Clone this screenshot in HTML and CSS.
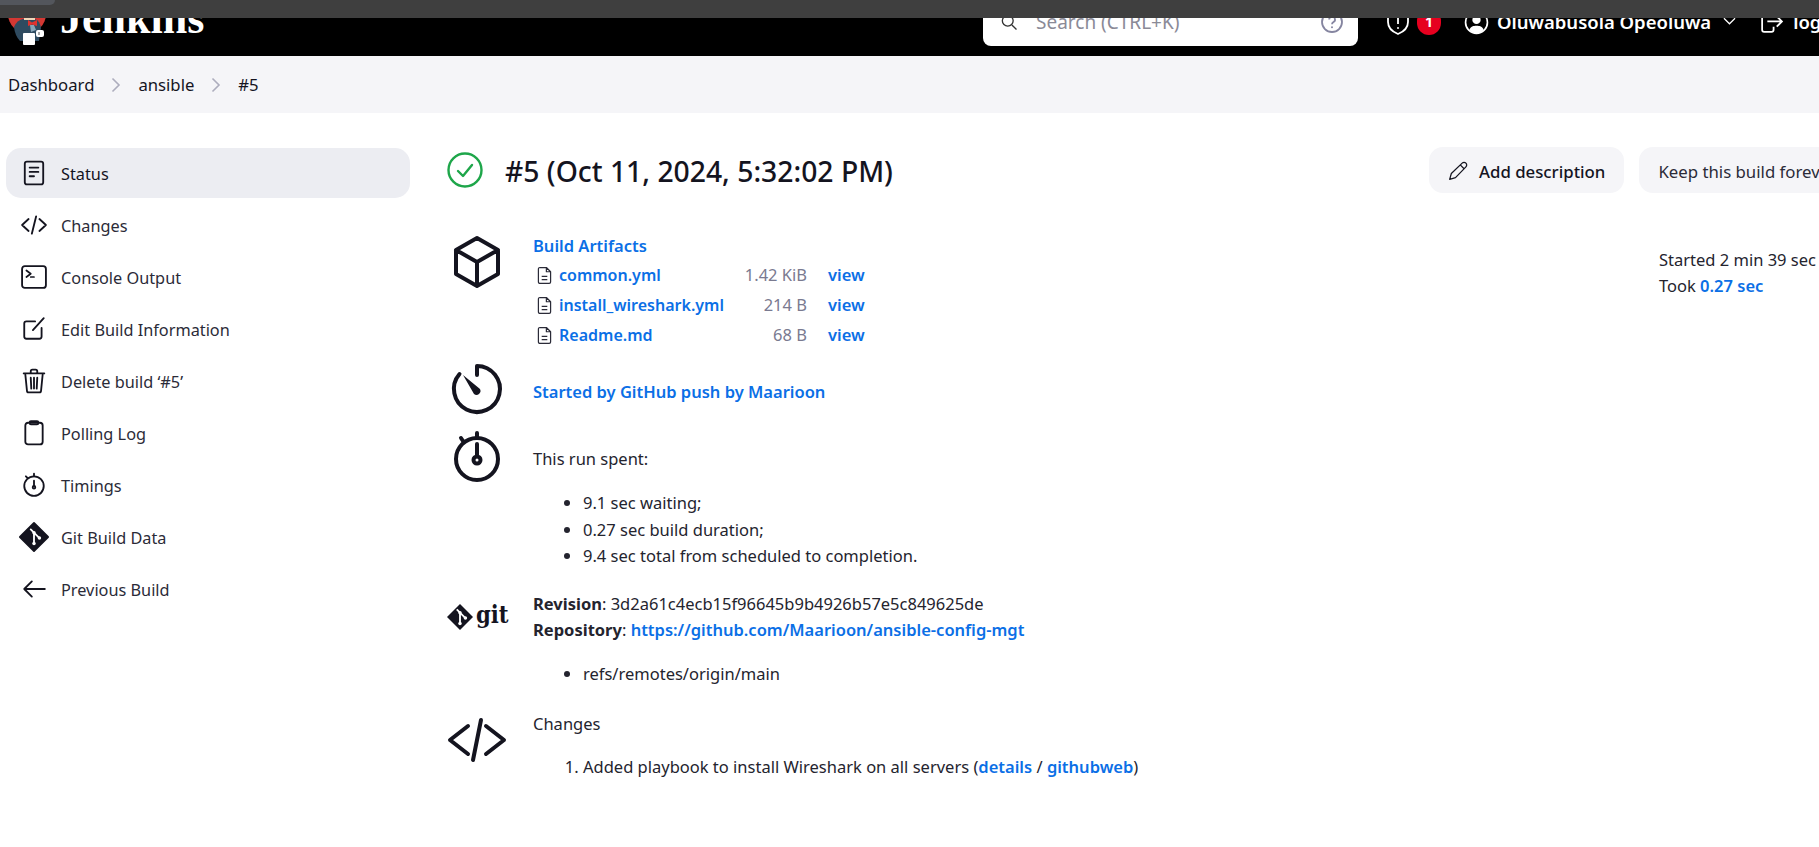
FILE: index.html
```html
<!DOCTYPE html>
<html lang="en">
<head>
    <meta charset="UTF-8">
    <title>ansible #5 - Jenkins</title>
    <link rel="stylesheet" href="styles.css">
</head>
<body>

    <div class="browser-strip"><span class="browser-tab"></span></div>

    <header class="top-bar">
        <a class="brand">
            <svg class="brand-logo" viewBox="0 -3 50 50">
                <circle cx="27" cy="14" r="19" fill="#d33833"/>
                <path d="M14 27 Q17 20 23 19 L35 19 Q40 21 41 28 L39 41 H20 Q15 36 14 27 Z" fill="#2f4b60"/>
                <rect x="24" y="15" width="11" height="5" fill="#f0d6b7"/>
                <path d="M30 25 L34 25 L36 30 L31 32 Z" fill="#87a5b8"/>
                <path d="M28 20 L32 22.5 L37 20 L37 26 L32 24.5 L28 26 Z" fill="#e0322e"/>
                <rect x="23" y="33" width="12" height="12" rx="1" fill="#fff"/>
                <rect x="36" y="30" width="8" height="7" rx="2" fill="#fff"/>
                <path d="M39 32 V35" stroke="#555" fill="none"/>
            </svg>
            <span class="brand-name">Jenkins</span>
        </a>
        <div class="search-box">
            <svg class="search-icon" viewBox="0 0 24 24"><circle cx="10.5" cy="10.5" r="6.5"/><path d="M15.5 15.5 L21 21"/></svg>
            <span class="search-hint">Search (CTRL+K)</span>
            <svg class="help-icon" viewBox="0 0 24 24"><circle cx="12" cy="12" r="10"/><path d="M9.2 9.5 A2.9 2.9 0 1 1 13.5 12 C12.5 12.6 12 13.2 12 14.3"/><circle class="dot" cx="12" cy="17.3" r="1"/></svg>
        </div>
        <svg class="shield-icon" viewBox="0 0 24 28"><path d="M12 2 L22 6 V14 C22 20 17 24 12 26 C7 24 2 20 2 14 V6 Z"/><path d="M12 9 V16"/><circle class="dot" cx="12" cy="20" r="1"/></svg>
        <span class="alert-badge">1</span>
        <svg class="user-icon" viewBox="0 0 24 24"><circle cx="12" cy="12" r="10.5"/><circle class="fill" cx="12" cy="9.5" r="4"/><path class="fill" d="M5 19 C6.5 15.5 9 15 12 15 C15 15 17.5 15.5 19 19 C17 21.5 14.5 22.5 12 22.5 C9.5 22.5 7 21.5 5 19 Z"/></svg>
        <span class="user-name">Oluwabusola Opeoluwa</span>
        <svg class="chevron-icon" viewBox="0 0 14 10"><path d="M1 2 L7 8 L13 2"/></svg>
        <svg class="logout-icon" viewBox="0 0 24 24"><path d="M14 7 V3 H3 V19 A2 2 0 0 0 5 21 H12 A2 2 0 0 0 14 19 V16"/><path d="M8 11 H22 M17 6 L22 11 L17 16"/></svg>
        <span class="logout-text">log out</span>
    </header>

    <nav class="breadcrumbs">
        <a>Dashboard</a>
        <svg class="crumb-sep" viewBox="0 0 10 16"><path d="M1.5 1.5 L8 8 L1.5 14.5"/></svg>
        <a>ansible</a>
        <svg class="crumb-sep" viewBox="0 0 10 16"><path d="M1.5 1.5 L8 8 L1.5 14.5"/></svg>
        <a>#5</a>
    </nav>

    <div class="page">
        <aside class="side-nav">
            <a class="side-item active">
                <svg viewBox="0 0 24 24"><rect x="3.5" y="1.5" width="17" height="21" rx="2"/><path d="M8 7 H16 M8 11 H16 M8 15 H12"/></svg>
                Status
            </a>
            <a class="side-item">
                <svg viewBox="0 0 24 24"><path d="M7 6.5 L1 12 L7 17.5 M17 6.5 L23 12 L17 17.5 M14 4 L10 20"/></svg>
                Changes
            </a>
            <a class="side-item">
                <svg viewBox="0 0 24 24"><rect x="1" y="2" width="22" height="20" rx="2.5"/><path d="M5 6 L9 9 L5 12 M9 12 H12" stroke-width="1.6"/></svg>
                Console Output
            </a>
            <a class="side-item">
                <svg viewBox="0 0 24 24"><path d="M13 5 H5 A2 2 0 0 0 3 7 V19 A2 2 0 0 0 5 21 H17 A2 2 0 0 0 19 19 V11"/><path d="M11 13 L21 2"/></svg>
                Edit Build Information
            </a>
            <a class="side-item">
                <svg viewBox="0 0 24 24"><path d="M4 6 L5.5 21 A1.5 1.5 0 0 0 7 22.5 H17 A1.5 1.5 0 0 0 18.5 21 L20 6"/><path d="M2.5 5 H21.5 M9 5 V3 A1.5 1.5 0 0 1 10.5 1.5 H13.5 A1.5 1.5 0 0 1 15 3 V5 M9 9 L9.5 19 M12 9 V19 M15 9 L14.5 19"/></svg>
                Delete build ‘#5’
            </a>
            <a class="side-item">
                <svg viewBox="0 0 24 24"><rect x="4" y="2.5" width="16" height="20" rx="2.5"/><rect x="8" y="1" width="8" height="3" rx="1.2"/></svg>
                Polling Log
            </a>
            <a class="side-item">
                <svg viewBox="0 0 24 24"><circle cx="12" cy="13" r="9"/><path d="M12 8 V13 M12 1.5 V4 M4.5 4 L6 5.5"/><circle cx="12" cy="14" r="1.2"/></svg>
                Timings
            </a>
            <a class="side-item">
                <svg viewBox="0 0 24 24"><path class="solid" d="M12 -1 L25 12 L12 25 L-1 12 Z"/><path class="cut" d="M9 5 L17 13 M12 8 V18 M12 8"/><circle class="hole" cx="12" cy="8" r="1.6"/><circle class="hole" cx="17" cy="13" r="1.6"/><circle class="hole" cx="12" cy="18" r="1.6"/></svg>
                Git Build Data
            </a>
            <a class="side-item">
                <svg viewBox="0 0 24 24"><path d="M3 12 H22 M10 5 L3 12 L10 19"/></svg>
                Previous Build
            </a>
        </aside>

        <main class="build">
            <div class="build-head">
                <svg class="status-ok" viewBox="0 0 36 36"><circle cx="18" cy="18" r="16.5"/><path d="M11 19 L16 24 L25 13"/></svg>
                <h1 class="build-title">#5 (Oct 11, 2024, 5:32:02 PM)</h1>
                <button class="btn btn-strong">
                    <svg viewBox="0 0 24 24"><path d="M2 22 L4 15 L17 2.5 A2.5 2.5 0 0 1 21.5 7 L9 20 Z M15 5 L19 9"/></svg>
                    Add description
                </button>
                <button class="btn">Keep this build forever</button>
            </div>

            <div class="build-body">
                <div class="rows">
                    <section class="row row-artifacts">
                        <svg class="row-icon" viewBox="0 0 52 52"><path d="M26 2 L47 14 V38 L26 50 L5 38 V14 Z M5 14 L26 26 L47 14 M26 26 V50"/></svg>
                        <div>
                            <a class="link">Build Artifacts</a>
                            <table class="files">
                                <tr>
                                    <td class="file-name"><svg viewBox="0 0 16 20"><path d="M3 1.5 H10 L14.5 6 V17 A1.5 1.5 0 0 1 13 18.5 H3 A1.5 1.5 0 0 1 1.5 17 V3 A1.5 1.5 0 0 1 3 1.5 Z M10 1.5 V6 H14.5 M5 11 H11 M5 14.5 H11"/></svg><a class="link">common.yml</a></td>
                                    <td class="file-size">1.42 KiB</td>
                                    <td class="file-view"><a class="link">view</a></td>
                                </tr>
                                <tr>
                                    <td class="file-name"><svg viewBox="0 0 16 20"><path d="M3 1.5 H10 L14.5 6 V17 A1.5 1.5 0 0 1 13 18.5 H3 A1.5 1.5 0 0 1 1.5 17 V3 A1.5 1.5 0 0 1 3 1.5 Z M10 1.5 V6 H14.5 M5 11 H11 M5 14.5 H11"/></svg><a class="link">install_wireshark.yml</a></td>
                                    <td class="file-size">214 B</td>
                                    <td class="file-view"><a class="link">view</a></td>
                                </tr>
                                <tr>
                                    <td class="file-name"><svg viewBox="0 0 16 20"><path d="M3 1.5 H10 L14.5 6 V17 A1.5 1.5 0 0 1 13 18.5 H3 A1.5 1.5 0 0 1 1.5 17 V3 A1.5 1.5 0 0 1 3 1.5 Z M10 1.5 V6 H14.5 M5 11 H11 M5 14.5 H11"/></svg><a class="link">Readme.md</a></td>
                                    <td class="file-size">68 B</td>
                                    <td class="file-view"><a class="link">view</a></td>
                                </tr>
                            </table>
                        </div>
                    </section>

                    <section class="row row-started">
                        <svg class="row-icon" viewBox="0 0 52 52"><path d="M26 3 A23 23 0 1 1 8.5 11 M26 3 V12"/><path class="solid" d="M12 12 L29 26 A4 4 0 0 1 23 31 Z"/></svg>
                        <a class="link started-link">Started by GitHub push by Maarioon</a>
                    </section>

                    <section class="row row-spent">
                        <svg class="row-icon" viewBox="0 0 52 52"><circle cx="26" cy="29" r="21"/><path d="M26 14 V26 M26 3 V8 M10 8 L12 11"/><circle cx="26" cy="30" r="3.5"/></svg>
                        <div>
                            <p>This run spent:</p>
                            <ul class="spent-list">
                                <li>9.1 sec waiting;</li>
                                <li>0.27 sec build duration;</li>
                                <li>9.4 sec total from scheduled to completion.</li>
                            </ul>
                        </div>
                    </section>

                    <section class="row row-git">
                        <div class="git-logo">
                            <svg viewBox="0 0 24 24"><path class="solid" d="M12 0 L24 12 L12 24 L0 12 Z"/><path class="cut" d="M9 5 L17 13 M12 8 V18"/><circle class="hole" cx="12" cy="8" r="1.6"/><circle class="hole" cx="17" cy="13" r="1.6"/><circle class="hole" cx="12" cy="18" r="1.6"/></svg>
                            <span class="git-word">git</span>
                        </div>
                        <div>
                            <p><b>Revision</b>: 3d2a61c4ecb15f96645b9b4926b57e5c849625de</p>
                            <p><b>Repository</b>: <a class="link">https://github.com/Maarioon/ansible-config-mgt</a></p>
                            <ul class="branch-list">
                                <li>refs/remotes/origin/main</li>
                            </ul>
                        </div>
                    </section>

                    <section class="row row-changes">
                        <svg class="row-icon" viewBox="0 0 52 52"><path d="M17 14 L-1 28 L17 42 M35 14 L53 28 L35 42 M30 8 L22 48"/></svg>
                        <div>
                            <p>Changes</p>
                            <ol class="change-list">
                                <li>Added playbook to install Wireshark on all servers (<a class="link">details</a> / <a class="link">githubweb</a>)</li>
                            </ol>
                        </div>
                    </section>
                </div>

                <div class="build-times">
                    <p>Started 2 min 39 sec ago</p>
                    <p>Took <a class="link">0.27 sec</a></p>
                </div>
            </div>
        </main>
    </div>

</body>
</html>
```

FILE: styles.css
```css
/* Global Styles */
html, body {
    margin: 0;
    padding: 0;
    height: 847px;
    overflow: hidden;
    background: #fff;
}

body {
    font-family: 'Noto Sans', sans-serif;
    font-size: 16.5px;
    line-height: 26px;
    color: #24242e;
    width: 1819px;
}

p {
    margin: 0;
}

/* Browser window edge that covers the top of the page */
.browser-strip {
    position: absolute;
    top: 0;
    left: 0;
    right: 0;
    height: 18px;
    background: #3f3f3f;
    z-index: 5;
}

.browser-tab {
    display: block;
    width: 55px;
    height: 5px;
    background: #53565c;
    border-radius: 0 0 8px 0;
}

/* Header */
.top-bar {
    display: flex;
    align-items: center;
    height: 44px;
    padding-bottom: 12px;
    background: #000;
    color: #fff;
    position: relative;
}

.brand {
    display: flex;
    align-items: center;
    width: 983px;
    flex: none;
}

.brand-logo {
    width: 50px;
    height: 50px;
    flex: none;
}

.brand-name {
    font-family: 'Liberation Serif', serif;
    font-weight: bold;
    font-size: 44px;
    margin-left: 10px;
    margin-top: -7px;
}

.search-box {
    display: flex;
    align-items: center;
    width: 375px;
    height: 48px;
    flex: none;
    background: #fff;
    border-radius: 8px;
    box-sizing: border-box;
    padding: 0 14px 0 16px;
    color: #8a8a97;
    font-size: 19px;
}

.search-icon {
    width: 20px;
    height: 20px;
    fill: none;
    stroke: #333;
    stroke-width: 1.6;
}

.search-hint {
    margin-left: 17px;
    flex: 1;
}

.help-icon {
    width: 24px;
    height: 24px;
    fill: none;
    stroke: #8585a0;
    stroke-width: 1.8;
}

.help-icon .dot {
    fill: #8585a0;
    stroke: none;
}

.shield-icon {
    width: 24px;
    height: 28px;
    flex: none;
    margin-left: 28px;
    fill: none;
    stroke: #fff;
    stroke-width: 1.8;
}

.shield-icon .dot {
    fill: #fff;
    stroke: none;
}

.alert-badge {
    width: 24px;
    height: 26px;
    flex: none;
    margin-left: 7px;
    border-radius: 12px;
    background: #e6001f;
    color: #fff;
    font-size: 14px;
    font-weight: 700;
    text-align: center;
    line-height: 26px;
}

.user-icon {
    width: 25px;
    height: 25px;
    flex: none;
    margin-left: 23px;
    fill: none;
    stroke: #fff;
    stroke-width: 1.6;
}

.user-icon .fill {
    fill: #fff;
    stroke: none;
}

.user-name {
    margin-left: 8px;
    font-size: 18.5px;
    font-weight: 600;
    white-space: nowrap;
}

.chevron-icon {
    width: 13px;
    height: 10px;
    flex: none;
    margin-left: 12px;
    margin-top: -2px;
    fill: none;
    stroke: #fff;
    stroke-width: 1.3;
}

.logout-icon {
    width: 25px;
    height: 25px;
    flex: none;
    margin-left: 23px;
    fill: none;
    stroke: #fff;
    stroke-width: 1.7;
}

.logout-text {
    margin-left: 9px;
    font-size: 18.5px;
    font-weight: 600;
    white-space: nowrap;
}

/* Breadcrumbs */
.breadcrumbs {
    display: flex;
    align-items: center;
    height: 57px;
    padding-left: 8px;
    background: #f5f5f8;
    font-size: 16.7px;
    color: #14141f;
}

.crumb-sep {
    width: 10px;
    height: 16px;
    margin: 0 17px;
    fill: none;
    stroke: #adadbd;
    stroke-width: 1.6;
}

/* Layout */
.page {
    display: flex;
    padding-top: 34px;
}

.side-nav {
    width: 404px;
    margin-left: 6px;
    flex: none;
    font-size: 16.3px;
}

.side-item {
    display: flex;
    align-items: center;
    box-sizing: border-box;
    height: 52px;
    padding: 2px 0 0 15px;
    border-radius: 15px;
    color: #2b2b38;
}

.side-item.active {
    background: #ecedf2;
    color: #14141f;
    height: 50px;
    margin: 1px 0;
}

.side-item svg {
    width: 26px;
    height: 26px;
    margin: -2px 14px 0 0;
    flex: none;
    fill: none;
    stroke: #14141f;
    stroke-width: 1.7;
    stroke-linecap: round;
    stroke-linejoin: round;
    overflow: visible;
}

.side-item .solid {
    fill: #14141f;
}

.side-item .cut {
    stroke: #fff;
}

.side-item .hole {
    fill: #fff;
    stroke: none;
}

.build {
    flex: none;
    width: 1371px;
    margin-left: 37px;
}

.build-head {
    display: flex;
    align-items: center;
    height: 46px;
    white-space: nowrap;
}

.status-ok {
    width: 36px;
    height: 36px;
    flex: none;
    fill: none;
    stroke: #1ea64a;
    stroke-width: 2.4;
    stroke-linecap: round;
    stroke-linejoin: round;
}

.build-title {
    width: 924px;
    flex: none;
    margin: 2px 0 0 22px;
    font-size: 28.3px;
    font-weight: 500;
    color: #14141f;
}

.btn {
    display: flex;
    align-items: center;
    height: 46px;
    flex: none;
    border: none;
    border-radius: 14px;
    background: #f5f5f8;
    color: #2b2b38;
    font-family: inherit;
    font-size: 16.8px;
    padding: 2px 19px 0;
    margin-right: 15px;
}

.btn-strong {
    font-weight: 500;
    color: #14141f;
}

.btn svg {
    width: 20px;
    height: 20px;
    margin-right: 11px;
    fill: none;
    stroke: #14141f;
    stroke-width: 1.5;
    stroke-linejoin: round;
}

.build-body {
    display: flex;
}

.rows {
    width: 1212px;
    flex: none;
}

.row {
    display: grid;
    grid-template-columns: 60px 1fr;
    column-gap: 26px;
    justify-items: start;
}

.row-icon {
    width: 52px;
    height: 52px;
    justify-self: center;
    fill: none;
    stroke: #14141f;
    stroke-width: 4;
    stroke-linecap: round;
    stroke-linejoin: round;
    overflow: visible;
}

.row-icon .solid {
    fill: #14141f;
    stroke: none;
}

.link {
    color: #0b6fe6;
    font-weight: 600;
    text-decoration: none;
}

.row-artifacts {
    margin-top: 40px;
}

.row-artifacts .row-icon {
    margin-top: 3px;
}

.files {
    border-collapse: collapse;
    margin-top: 1px;
}

.files td {
    height: 30px;
    padding: 0;
}

.file-name {
    display: flex;
    align-items: center;
    height: 30px;
    width: 200px;
    padding-left: 4px !important;
    font-size: 16px;
}

.file-name svg {
    width: 15px;
    height: 19px;
    margin-right: 7px;
    flex: none;
    fill: none;
    stroke: #2b2b38;
    stroke-width: 1.3;
    stroke-linejoin: round;
}

.file-size {
    width: 70px;
    text-align: right;
    color: #7a7a90;
}

.file-view {
    padding-left: 21px !important;
}

.row-started {
    margin-top: 13px;
    align-items: center;
}

.started-link {
    padding-top: 5px;
}

.row-spent {
    margin-top: 31px;
}

.row-spent .row-icon {
    margin-top: -16px;
}

.spent-list,
.branch-list,
.change-list {
    margin: 18px 0 0;
    padding-left: 50px;
}

.spent-list li {
    line-height: 26.5px;
}

.row-git {
    margin-top: 21px;
}

.git-logo {
    display: flex;
    align-items: center;
    justify-self: start;
    margin-top: 12px;
    height: 28px;
}

.git-logo svg {
    width: 26px;
    height: 26px;
    flex: none;
    fill: #14141f;
    stroke: none;
    overflow: visible;
}

.git-logo .cut {
    stroke: #fff;
    stroke-width: 1.7;
}

.git-logo .hole {
    fill: #fff;
}

.git-word {
    margin-left: 3px;
    font-family: 'DejaVu Serif Condensed', 'DejaVu Serif', serif;
    font-weight: bold;
    font-size: 23.5px;
    line-height: 28px;
    margin-top: -4px;
    color: #14141f;
}

.row-changes {
    margin-top: 24px;
}

.row-changes .row-icon {
    margin-top: 1px;
}

.change-list {
    margin-top: 17px;
}

.build-times {
    margin-top: 54px;
    white-space: nowrap;
}
```
